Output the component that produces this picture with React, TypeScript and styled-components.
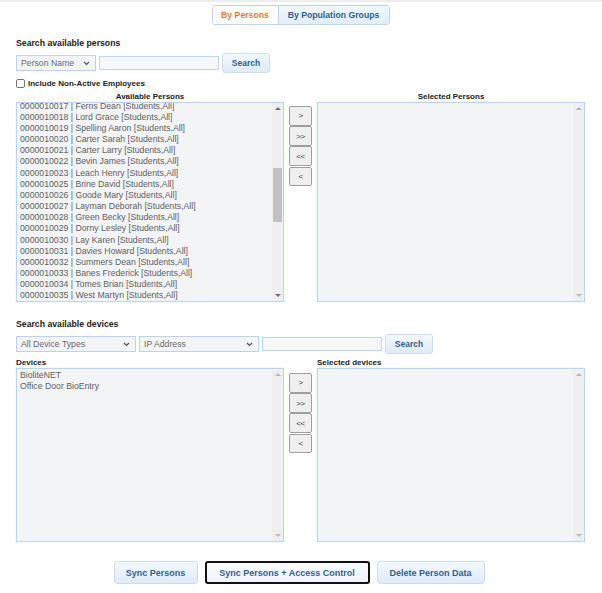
import React from "react";
import styled, { createGlobalStyle } from "styled-components";

const GlobalStyle = createGlobalStyle`
  html, body {
    margin: 0;
    padding: 0;
    background: #ffffff;
  }
  body {
    font-family: "Liberation Sans", Arial, sans-serif;
  }
`;

const persons = [
  "0000010017 | Ferris Dean [Students,All]",
  "0000010018 | Lord Grace [Students,All]",
  "0000010019 | Spelling Aaron [Students,All]",
  "0000010020 | Carter Sarah [Students,All]",
  "0000010021 | Carter Larry [Students,All]",
  "0000010022 | Bevin James [Students,All]",
  "0000010023 | Leach Henry [Students,All]",
  "0000010025 | Brine David [Students,All]",
  "0000010026 | Goode Mary [Students,All]",
  "0000010027 | Layman Deborah [Students,All]",
  "0000010028 | Green Becky [Students,All]",
  "0000010029 | Dorny Lesley [Students,All]",
  "0000010030 | Lay Karen [Students,All]",
  "0000010031 | Davies Howard [Students,All]",
  "0000010032 | Summers Dean [Students,All]",
  "0000010033 | Banes Frederick [Students,All]",
  "0000010034 | Tomes Brian [Students,All]",
  "0000010035 | West Martyn [Students,All]",
];

const devices = ["BioliteNET", "Office Door BioEntry"];

const Page = styled.div`
  width: 602px;
  height: 593px;
  overflow: hidden;
  background: #ffffff;
  color: #222;
`;

const TopStrip = styled.div`
  height: 2px;
  background: #ededed;
`;

const Content = styled.div`
  padding: 0 17px 0 16px;
  display: flex;
  flex-direction: column;
`;

const TabRow = styled.div`
  margin-top: 3px;
  display: flex;
  justify-content: center;
`;

const TabGroup = styled.div`
  display: flex;
  border: 1px solid #bcd6f1;
  border-radius: 3px;
  overflow: hidden;
`;

const Tab = styled.div<{ $active?: boolean; $width: number }>`
  width: ${(p) => p.$width}px;
  height: 18px;
  display: flex;
  align-items: center;
  justify-content: center;
  font-size: 8.7px;
  font-weight: bold;
  color: ${(p) => (p.$active ? "#e8782c" : "#2f5f8e")};
  background: ${(p) =>
    p.$active ? "#ffffff" : "linear-gradient(#f1f7fd, #e1edf9)"};
  & + & {
    border-left: 1px solid #bcd6f1;
  }
`;

const SectionTitle = styled.div<{ $top: number }>`
  margin-top: ${(p) => p.$top}px;
  height: 12px;
  line-height: 12px;
  font-size: 8.7px;
  font-weight: bold;
  color: #222;
`;

const SearchRow = styled.div`
  margin-top: 4px;
  height: 20px;
  display: flex;
  align-items: center;
  gap: 3px;
`;

const Select = styled.div<{ $width: number }>`
  box-sizing: border-box;
  width: ${(p) => p.$width}px;
  height: 16px;
  padding: 0 5px 0 4px;
  display: flex;
  align-items: center;
  justify-content: space-between;
  background: #f3f4f6;
  border: 1px solid #b9d4f0;
  color: #6a6a6a;
  font-size: 8.7px;
`;

const TextInput = styled.div<{ $width: number }>`
  box-sizing: border-box;
  width: ${(p) => p.$width}px;
  height: 14px;
  background: #f6f7f9;
  border: 1px solid #bed7f1;
`;

const BlueButton = styled.div<{ $width: number; $height?: number; $size?: number }>`
  box-sizing: border-box;
  width: ${(p) => p.$width}px;
  height: ${(p) => p.$height ?? 20}px;
  display: flex;
  align-items: center;
  justify-content: center;
  border: 1px solid #cadff4;
  border-radius: 3px;
  background: linear-gradient(#f3f8fe, #dfebf8);
  color: #2f5f8e;
  font-size: ${(p) => p.$size ?? 8.5}px;
  font-weight: bold;
`;

const StrongButton = styled(BlueButton)`
  border: 2px solid #111;
  background: linear-gradient(#fbfdff, #eef4fb);
`;

const CheckRow = styled.label`
  margin-top: 5px;
  height: 10px;
  display: flex;
  align-items: center;
  gap: 3px;
  font-size: 8px;
  font-weight: bold;
  color: #222;
`;

const CheckBox = styled.span`
  box-sizing: border-box;
  width: 9px;
  height: 9px;
  border: 1px solid #767676;
  border-radius: 2px;
  background: #fff;
`;

const Transfer = styled.div`
  margin-top: 4px;
  display: grid;
  grid-template-columns: 268px 23px 268px;
  grid-template-rows: 10px auto;
  column-gap: 5px;
`;

const ListLabel = styled.div<{ $center?: boolean }>`
  line-height: 10px;
  font-size: 8px;
  font-weight: bold;
  color: #222;
  text-align: ${(p) => (p.$center ? "center" : "left")};
`;

const ListBox = styled.div<{ $height: number }>`
  box-sizing: border-box;
  height: ${(p) => p.$height}px;
  display: flex;
  background: #f3f4f6;
  border: 1px solid #b9d5f2;
  box-shadow: 0 0 1px #d4e6f8;
  overflow: hidden;
`;

const Items = styled.div<{ $shift: number }>`
  flex: 1;
  padding-left: 3px;
  margin-top: ${(p) => p.$shift}px;
  overflow: hidden;
`;

const Item = styled.div`
  height: 11.18px;
  line-height: 11.18px;
  font-size: 8.7px;
  color: #616161;
  white-space: nowrap;
`;

const Track = styled.div`
  width: 11px;
  display: flex;
  flex-direction: column;
  align-items: center;
  background: #efefef;
`;

const Arrow = styled.span<{ $down?: boolean; $light?: boolean }>`
  margin: ${(p) => (p.$down ? "auto 0 4px" : "4px 0 0")};
  width: 0;
  height: 0;
  border-left: 3px solid transparent;
  border-right: 3px solid transparent;
  ${(p) =>
    p.$down
      ? `border-top: 3px solid ${p.$light ? "#b8b8b8" : "#6f6f6f"};`
      : `border-bottom: 3px solid ${p.$light ? "#b8b8b8" : "#6f6f6f"};`}
`;

const Thumb = styled.div<{ $top: number; $height: number }>`
  margin-top: ${(p) => p.$top}px;
  width: 9px;
  height: ${(p) => p.$height}px;
  background: #c1c1c1;
`;

const MoveColumn = styled.div<{ $top: number }>`
  padding-top: ${(p) => p.$top}px;
  display: flex;
  flex-direction: column;
  gap: 0.5px;
`;

const MoveButton = styled.div`
  box-sizing: border-box;
  width: 23px;
  height: 19.7px;
  display: flex;
  align-items: center;
  justify-content: center;
  border: 1px solid #9e9e9e;
  border-radius: 2px;
  background: #efefef;
  color: #3c3c3c;
  font-size: 8px;
  letter-spacing: -0.5px;
`;

const ActionRow = styled.div`
  margin-top: 19px;
  margin-right: 3px;
  display: flex;
  justify-content: center;
  gap: 7px;
`;

const Chevron = () => (
  <svg width="7" height="5" viewBox="0 0 7 5">
    <path d="M1 1 L3.5 3.5 L6 1" fill="none" stroke="#555" strokeWidth="1.2" />
  </svg>
);

const Scrollbar: React.FC<{ thumb?: { top: number; height: number } }> = ({ thumb }) => (
  <Track>
    <Arrow $light={!thumb} />
    {thumb && <Thumb $top={thumb.top} $height={thumb.height} />}
    <Arrow $down $light={!thumb} />
  </Track>
);

const Movers: React.FC<{ top: number }> = ({ top }) => (
  <MoveColumn $top={top}>
    <MoveButton>&gt;</MoveButton>
    <MoveButton>&gt;&gt;</MoveButton>
    <MoveButton>&lt;&lt;</MoveButton>
    <MoveButton>&lt;</MoveButton>
  </MoveColumn>
);

export default function App() {
  return (
    <Page>
      <GlobalStyle />
      <TopStrip />
      <Content>
        <TabRow>
          <TabGroup>
            <Tab $active $width={65}>By Persons</Tab>
            <Tab $width={110}>By Population Groups</Tab>
          </TabGroup>
        </TabRow>

        <SectionTitle $top={12}>Search available persons</SectionTitle>
        <SearchRow>
          <Select $width={80}>
            Person Name <Chevron />
          </Select>
          <TextInput $width={120} />
          <BlueButton $width={48}>Search</BlueButton>
        </SearchRow>
        <CheckRow>
          <CheckBox />
          Include Non-Active Employees
        </CheckRow>

        <Transfer>
          <ListLabel $center>Available Persons</ListLabel>
          <span />
          <ListLabel $center>Selected Persons</ListLabel>
          <ListBox $height={200}>
            <Items $shift={-2.5}>
              {persons.map((p) => (
                <Item key={p}>{p}</Item>
              ))}
            </Items>
            <Scrollbar thumb={{ top: 58, height: 54 }} />
          </ListBox>
          <Movers top={4} />
          <ListBox $height={200}>
            <Items $shift={0} />
            <Scrollbar />
          </ListBox>
        </Transfer>

        <SectionTitle $top={16}>Search available devices</SectionTitle>
        <SearchRow>
          <Select $width={120}>
            All Device Types <Chevron />
          </Select>
          <Select $width={120}>
            IP Address <Chevron />
          </Select>
          <TextInput $width={120} />
          <BlueButton $width={48}>Search</BlueButton>
        </SearchRow>

        <Transfer>
          <ListLabel>Devices</ListLabel>
          <span />
          <ListLabel>Selected devices</ListLabel>
          <ListBox $height={174}>
            <Items $shift={0.5}>
              {devices.map((d) => (
                <Item key={d}>{d}</Item>
              ))}
            </Items>
            <Scrollbar />
          </ListBox>
          <Movers top={5} />
          <ListBox $height={174}>
            <Items $shift={0} />
            <Scrollbar />
          </ListBox>
        </Transfer>

        <ActionRow>
          <BlueButton $width={84} $height={23} $size={9}>Sync Persons</BlueButton>
          <StrongButton $width={165} $height={23} $size={9}>
            Sync Persons + Access Control
          </StrongButton>
          <BlueButton $width={108} $height={23} $size={9}>Delete Person Data</BlueButton>
        </ActionRow>
      </Content>
    </Page>
  );
}
